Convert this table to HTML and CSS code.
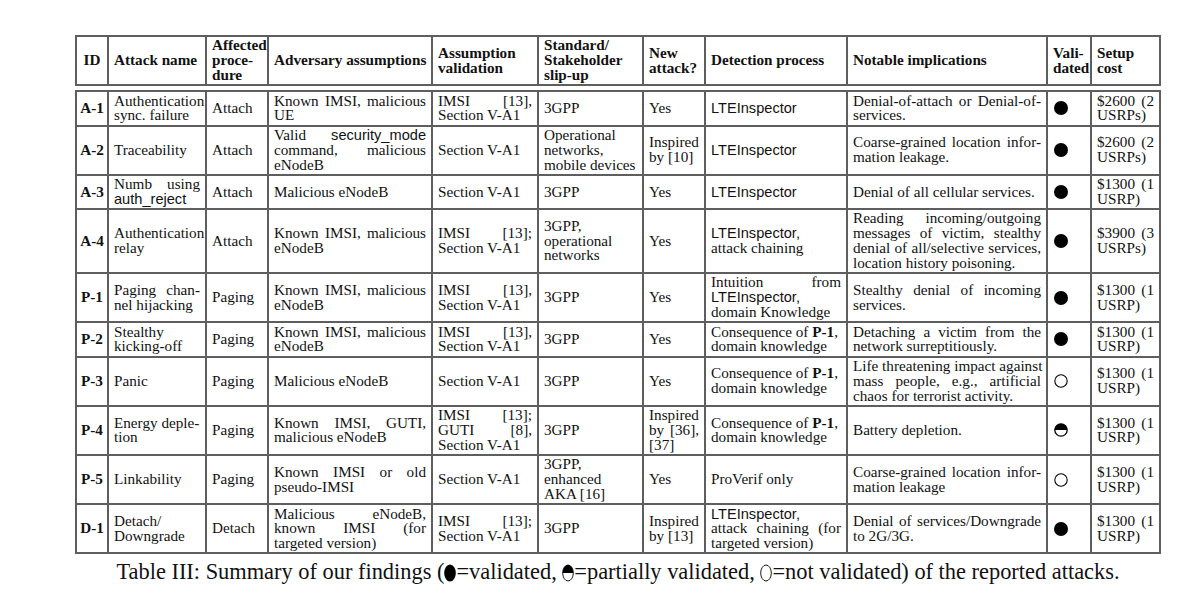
FILE: index.html
```html
<!DOCTYPE html>
<html lang="en">
<head>
<meta charset="utf-8">
<title>Table III</title>
<link rel="stylesheet" href="styles.css">
</head>
<body>
<div class="page">
  <table class="findings">
    <colgroup>
      <col class="c-id"><col class="c-name"><col class="c-proc"><col class="c-adv"><col class="c-val"><col class="c-std"><col class="c-new"><col class="c-det"><col class="c-imp"><col class="c-ok"><col class="c-cost">
    </colgroup>
    <thead>
      <tr class="head">
        <th class="center">ID</th>
        <th>Attack name</th>
        <th>Affected<br>proce-<br>dure</th>
        <th>Adversary assumptions</th>
        <th>Assumption<br>validation</th>
        <th>Standard/<br>Stakeholder<br>slip-up</th>
        <th>New<br>attack?</th>
        <th>Detection process</th>
        <th>Notable implications</th>
        <th>Vali-<br>dated</th>
        <th>Setup<br>cost</th>
      </tr>
      <tr class="gap"><td></td><td></td><td></td><td></td><td></td><td></td><td></td><td></td><td></td><td></td><td></td></tr>
    </thead>
    <tbody>
      <tr>
        <td class="id">A-1</td>
        <td>Authentication<br>sync. failure</td>
        <td>Attach</td>
        <td><span class="j">Known IMSI, malicious</span>UE</td>
        <td><span class="j">IMSI [13],</span>Section V-A1</td>
        <td>3GPP</td>
        <td>Yes</td>
        <td><span class="sf">LTEInspector</span></td>
        <td><span class="j">Denial-of-attach or Denial-of-</span>services.</td>
        <td><svg class="dot" viewBox="0 0 14 14"><circle cx="7" cy="7" r="7" fill="#000"/></svg></td>
        <td><span class="j">$2600 (2</span>USRPs)</td>
      </tr>
      <tr>
        <td class="id">A-2</td>
        <td>Traceability</td>
        <td>Attach</td>
        <td><span class="j">Valid <span class="sf">security_mode</span></span><span class="j">command, malicious</span>eNodeB</td>
        <td>Section V-A1</td>
        <td>Operational<br>networks,<br>mobile devices</td>
        <td>Inspired<br>by [10]</td>
        <td><span class="sf">LTEInspector</span></td>
        <td><span class="j">Coarse-grained location infor-</span>mation leakage.</td>
        <td><svg class="dot" viewBox="0 0 14 14"><circle cx="7" cy="7" r="7" fill="#000"/></svg></td>
        <td><span class="j">$2600 (2</span>USRPs)</td>
      </tr>
      <tr>
        <td class="id">A-3</td>
        <td><span class="j">Numb using</span><span class="sf">auth_reject</span></td>
        <td>Attach</td>
        <td>Malicious eNodeB</td>
        <td>Section V-A1</td>
        <td>3GPP</td>
        <td>Yes</td>
        <td><span class="sf">LTEInspector</span></td>
        <td>Denial of all cellular services.</td>
        <td><svg class="dot" viewBox="0 0 14 14"><circle cx="7" cy="7" r="7" fill="#000"/></svg></td>
        <td><span class="j">$1300 (1</span>USRP)</td>
      </tr>
      <tr>
        <td class="id">A-4</td>
        <td>Authentication<br>relay</td>
        <td>Attach</td>
        <td><span class="j">Known IMSI, malicious</span>eNodeB</td>
        <td><span class="j">IMSI [13];</span>Section V-A1</td>
        <td>3GPP,<br>operational<br>networks</td>
        <td>Yes</td>
        <td><span class="sf">LTEInspector,</span><br>attack chaining</td>
        <td><span class="j">Reading incoming/outgoing</span><span class="j">messages of victim, stealthy</span><span class="j">denial of all/selective services,</span>location history poisoning.</td>
        <td><svg class="dot" viewBox="0 0 14 14"><circle cx="7" cy="7" r="7" fill="#000"/></svg></td>
        <td><span class="j">$3900 (3</span>USRPs)</td>
      </tr>
      <tr>
        <td class="id">P-1</td>
        <td><span class="j">Paging chan-</span>nel hijacking</td>
        <td>Paging</td>
        <td><span class="j">Known IMSI, malicious</span>eNodeB</td>
        <td><span class="j">IMSI [13],</span>Section V-A1</td>
        <td>3GPP</td>
        <td>Yes</td>
        <td><span class="j">Intuition from</span><span class="sf">LTEInspector,</span><br>domain Knowledge</td>
        <td><span class="j">Stealthy denial of incoming</span>services.</td>
        <td><svg class="dot" viewBox="0 0 14 14"><circle cx="7" cy="7" r="7" fill="#000"/></svg></td>
        <td><span class="j">$1300 (1</span>USRP)</td>
      </tr>
      <tr>
        <td class="id">P-2</td>
        <td>Stealthy<br>kicking-off</td>
        <td>Paging</td>
        <td><span class="j">Known IMSI, malicious</span>eNodeB</td>
        <td><span class="j">IMSI [13],</span>Section V-A1</td>
        <td>3GPP</td>
        <td>Yes</td>
        <td>Consequence of <b>P-1</b>,<br>domain knowledge</td>
        <td><span class="j">Detaching a victim from the</span>network surreptitiously.</td>
        <td><svg class="dot" viewBox="0 0 14 14"><circle cx="7" cy="7" r="7" fill="#000"/></svg></td>
        <td><span class="j">$1300 (1</span>USRP)</td>
      </tr>
      <tr>
        <td class="id">P-3</td>
        <td>Panic</td>
        <td>Paging</td>
        <td>Malicious eNodeB</td>
        <td>Section V-A1</td>
        <td>3GPP</td>
        <td>Yes</td>
        <td>Consequence of <b>P-1</b>,<br>domain knowledge</td>
        <td><span class="j">Life threatening impact against</span><span class="j">mass people, e.g., artificial</span>chaos for terrorist activity.</td>
        <td><svg class="dot" viewBox="0 0 14 14"><circle cx="7" cy="7" r="6.2" fill="#fff" stroke="#000" stroke-width="1.1"/></svg></td>
        <td><span class="j">$1300 (1</span>USRP)</td>
      </tr>
      <tr>
        <td class="id">P-4</td>
        <td>Energy deple-<br>tion</td>
        <td>Paging</td>
        <td><span class="j">Known IMSI, GUTI,</span>malicious eNodeB</td>
        <td><span class="j">IMSI [13];</span><span class="j">GUTI [8],</span>Section V-A1</td>
        <td>3GPP</td>
        <td>Inspired<br><span class="j">by [36],</span>[37]</td>
        <td>Consequence of <b>P-1</b>,<br>domain knowledge</td>
        <td>Battery depletion.</td>
        <td><svg class="dot" viewBox="0 0 14 14"><circle cx="7" cy="7" r="6.2" fill="#fff" stroke="#000" stroke-width="1.3"/><path d="M0.8 7 A6.2 6.2 0 0 1 13.2 7 Z" fill="#000"/></svg></td>
        <td><span class="j">$1300 (1</span>USRP)</td>
      </tr>
      <tr>
        <td class="id">P-5</td>
        <td>Linkability</td>
        <td>Paging</td>
        <td><span class="j">Known IMSI or old</span>pseudo-IMSI</td>
        <td>Section V-A1</td>
        <td>3GPP,<br>enhanced<br>AKA [16]</td>
        <td>Yes</td>
        <td>ProVerif only</td>
        <td><span class="j">Coarse-grained location infor-</span>mation leakage</td>
        <td><svg class="dot" viewBox="0 0 14 14"><circle cx="7" cy="7" r="6.2" fill="#fff" stroke="#000" stroke-width="1.1"/></svg></td>
        <td><span class="j">$1300 (1</span>USRP)</td>
      </tr>
      <tr>
        <td class="id">D-1</td>
        <td>Detach/<br>Downgrade</td>
        <td>Detach</td>
        <td><span class="j">Malicious eNodeB,</span><span class="j">known IMSI (for</span>targeted version)</td>
        <td><span class="j">IMSI [13];</span>Section V-A1</td>
        <td>3GPP</td>
        <td>Inspired<br>by [13]</td>
        <td><span class="sf">LTEInspector,</span><br><span class="j">attack chaining (for</span>targeted version)</td>
        <td><span class="j">Denial of services/Downgrade</span>to 2G/3G.</td>
        <td><svg class="dot" viewBox="0 0 14 14"><circle cx="7" cy="7" r="7" fill="#000"/></svg></td>
        <td><span class="j">$1300 (1</span>USRP)</td>
      </tr>
    </tbody>
  </table>
  <p class="caption">Table III: Summary of our findings (<svg class="cdot" viewBox="0 0 12 18"><ellipse cx="6" cy="9" rx="5.8" ry="8.6" fill="#000"/></svg>=validated, <svg class="cdot" viewBox="0 0 12 18"><ellipse cx="6" cy="9" rx="5.3" ry="8" fill="#fff" stroke="#000" stroke-width="0.9"/><path d="M0.7 9 A5.3 8 0 0 1 11.3 9 Z" fill="#000"/></svg>=partially validated, <svg class="cdot" viewBox="0 0 12 18"><ellipse cx="6" cy="9" rx="5.3" ry="8" fill="#fff" stroke="#000" stroke-width="0.9"/></svg>=not validated) of the reported attacks.</p>
</div>
</body>
</html>
```

FILE: styles.css
```css
html, body {
  margin: 0;
  padding: 0;
  background: #fff;
}

body {
  color: #111;
  font-family: "Liberation Serif", "Times New Roman", serif;
}

.page {
  padding: 35px 0 0 75px;
  width: 1086px;
}

.findings {
  border-collapse: collapse;
  table-layout: fixed;
  width: 1086px;
  border: 2px solid #5e5e5e;
  font-size: 15.2px;
  line-height: 14.8px;
}

.c-id { width: 32px; }
.c-name { width: 98px; }
.c-proc { width: 62px; }
.c-adv { width: 164px; }
.c-val { width: 106px; }
.c-std { width: 105px; }
.c-new { width: 62px; }
.c-det { width: 142px; }
.c-imp { width: 200px; }
.c-ok { width: 44px; }
.c-cost { width: 69px; }

.findings th,
.findings td {
  border: 2px solid #5e5e5e;
  padding: 1.4px 5px;
  vertical-align: middle;
  text-align: left;
  overflow: visible;
}

.findings th {
  font-weight: bold;
  white-space: nowrap;
}

.findings th.center {
  text-align: center;
  padding: 0;
}

.findings td.id {
  font-weight: bold;
  text-align: center;
  padding: 0;
  white-space: nowrap;
}

.findings tr.gap td {
  height: 4px;
  padding: 0;
  border-left-style: hidden;
  border-right-style: hidden;
  font-size: 0;
  line-height: 0;
}

.j {
  display: block;
  text-align: justify;
  text-align-last: justify;
  white-space: nowrap;
}

.sf {
  font-family: "Liberation Sans", Arial, sans-serif;
  font-size: 14.6px;
  line-height: 12px;
}

.dot {
  display: block;
  width: 14px;
  height: 14px;
  margin-left: 1px;
}

.caption {
  margin: 5px 0 0;
  width: 1086px;
  text-align: center;
  font-size: 22.4px;
  line-height: 26px;
  color: #111;
}

.cdot {
  display: inline-block;
  width: 12px;
  height: 18px;
  vertical-align: -3px;
}
```
